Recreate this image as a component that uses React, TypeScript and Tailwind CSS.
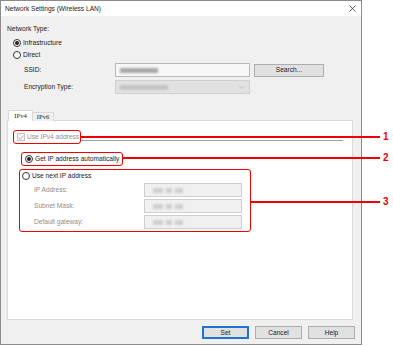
import React from "react";

const font = { fontFamily: '"Liberation Sans", Arial, sans-serif' };

function Radio({ checked }: { checked?: boolean }) {
  return (
    <span className="flex h-[8px] w-[8px] shrink-0 items-center justify-center rounded-full border border-[#333] bg-white">
      {checked && <span className="h-[4px] w-[4px] rounded-full bg-[#222]" />}
    </span>
  );
}

function Blur({ widths, color = "bg-[#9c9c9c]" }: { widths: number[]; color?: string }) {
  return (
    <div className="flex items-center gap-[3px] blur-[0.8px]">
      {widths.map((w, i) => (
        <span key={i} className={`h-[5px] ${color}`} style={{ width: w }} />
      ))}
    </div>
  );
}

function IpField({ label }: { label: string }) {
  return (
    <div className="flex h-[14px] items-center">
      <span className="w-[124px] pl-[14px] text-[#8e8e8e]">{label}</span>
      <div className="flex h-[14px] w-[98px] items-center gap-[14px] border border-[#cfcfcf] bg-[#f0f0f0] pl-[8px]">
        <Blur widths={[10, 6, 8]} color="bg-[#cfcfcf]" />
      </div>
    </div>
  );
}

function Button({ label, primary }: { label: string; primary?: boolean }) {
  return (
    <div
      className={`flex h-[13px] w-[47px] items-center justify-center bg-[#e1e1e1] ${
        primary ? "border-2 border-[#1e74cf]" : "border border-[#adadad]"
      }`}
    >
      {label}
    </div>
  );
}

export default function App() {
  return (
    <div className="relative h-[346px] w-[393px] whitespace-nowrap bg-white text-[6.6px] text-[#1a1a1a]" style={font}>
      <div className="flex h-[345px] w-[362px] flex-col border border-[#8c8c8c] bg-[#f0f0f0]">
        {/* title bar */}
        <div className="flex h-[15px] shrink-0 items-center justify-between bg-white pl-[4px] pr-[5px]">
          <span>Network Settings (Wireless LAN)</span>
          <svg width="7" height="7" viewBox="0 0 7 7" stroke="#333" strokeWidth="0.8">
            <path d="M0.5 0.5 L6.5 6.5 M6.5 0.5 L0.5 6.5" />
          </svg>
        </div>

        <div className="flex flex-col pl-[6px]">
          <div className="mt-[8px] flex h-[9px] items-center">Network Type:</div>
          <div className="mt-[5px] flex h-[10px] items-center gap-[2px] pl-[6px]">
            <Radio checked />
            <span>Infrastructure</span>
          </div>
          <div className="mt-[2px] flex h-[10px] items-center gap-[2px] pl-[6px]">
            <Radio />
            <span>Direct</span>
          </div>

          <div className="mt-[3px] flex h-[14px] items-center">
            <span className="w-[108px] pl-[17px]">SSID:</span>
            <div className="flex h-[14px] w-[135px] items-center border border-[#b9b9b9] bg-[#f7f7f7] pl-[4px]">
              <Blur widths={[38]} color="bg-[#a8a8a8]" />
            </div>
            <div className="ml-[4px] flex h-[13px] w-[70px] items-center justify-center border border-[#adadad] bg-[#e1e1e1]">
              Search...
            </div>
          </div>
          <div className="mt-[3px] flex h-[14px] items-center">
            <span className="w-[108px] pl-[17px]">Encryption Type:</span>
            <div className="flex h-[14px] w-[135px] items-center justify-between border border-[#d0d0d0] bg-[#e1e1e1] pl-[4px] pr-[5px]">
              <Blur widths={[48]} color="bg-[#c4c4c4]" />
              <svg width="5" height="3" viewBox="0 0 5 3" fill="none" stroke="#b0b0b0" strokeWidth="0.8">
                <path d="M0.3 0.3 L2.5 2.5 L4.7 0.3" />
              </svg>
            </div>
          </div>

          {/* tabs */}
          <div className="relative z-10 mt-[16px] flex h-[11px] items-end pl-[1px]">
            <div className="flex h-[11px] w-[25px] items-center justify-center border border-b-0 border-[#d9d9d9] bg-white" style={{ fontFamily: '"Liberation Serif", serif' }}>
              IPv4
            </div>
            <div className="flex h-[9px] w-[21px] items-center justify-center border border-b-0 border-l-0 border-[#d9d9d9] bg-[#f0f0f0]" style={{ fontFamily: '"Liberation Serif", serif' }}>
              IPv6
            </div>
          </div>
          <div className="-mt-[1px] flex h-[200px] w-[346px] flex-col border border-[#d9d9d9] bg-white pl-[5px]">
            <div className="mt-[9px] flex items-center">
              <div className="flex h-[14px] w-[68px] items-center gap-[2px] rounded-[3px] border-[1.5px] border-[#f00000] pl-[3px] text-[#8e8e8e]">
                <span className="flex h-[8px] w-[8px] shrink-0 items-center justify-center border border-[#c4c4c4] bg-[#f4f4f4]">
                  <svg width="6" height="5" viewBox="0 0 6 5" fill="none" stroke="#b8b8b8" strokeWidth="1">
                    <path d="M0.5 2.5 L2.2 4.2 L5.5 0.6" />
                  </svg>
                </span>
                <span>Use IPv4 address</span>
              </div>
              <div className="mt-[6px] h-px w-[262px] bg-[#a0a0a0]" />
            </div>

            <div className="mt-[8px] ml-[8px] flex h-[14px] w-[102px] items-center gap-[2px] rounded-[3px] border-[1.5px] border-[#f00000] pl-[3px]">
              <Radio checked />
              <span>Get IP address automatically</span>
            </div>

            <div className="mt-[3px] ml-[6px] flex h-[63px] w-[232px] flex-col rounded-[3px] border-[1.5px] border-[#f00000] pt-[1px]">
              <div className="flex h-[10px] items-center gap-[2px] pl-[2px]">
                <Radio />
                <span>Use next IP address</span>
              </div>
              <div className="mt-[2px] flex flex-col gap-[2px]">
                <IpField label="IP Address:" />
                <IpField label="Subnet Mask:" />
                <IpField label="Default gateway:" />
              </div>
            </div>
          </div>

          <div className="mt-[6px] flex h-[13px] items-center gap-[6px] pl-[195px]">
            <Button label="Set" primary />
            <Button label="Cancel" />
            <Button label="Help" />
          </div>
        </div>
      </div>

      {/* callout lines */}
      <div className="absolute left-[81px] top-[136px] h-[1.5px] w-[299px] bg-[#f00000]" />
      <div className="absolute left-[123px] top-[157px] h-[1.5px] w-[257px] bg-[#f00000]" />
      <div className="absolute left-[251px] top-[201px] h-[1.5px] w-[129px] bg-[#f00000]" />
      <span className="absolute left-[383px] top-[131px] text-[10px] font-bold leading-[12px] text-[#f00000]">1</span>
      <span className="absolute left-[383px] top-[152px] text-[10px] font-bold leading-[12px] text-[#f00000]">2</span>
      <span className="absolute left-[383px] top-[196px] text-[10px] font-bold leading-[12px] text-[#f00000]">3</span>
    </div>
  );
}
